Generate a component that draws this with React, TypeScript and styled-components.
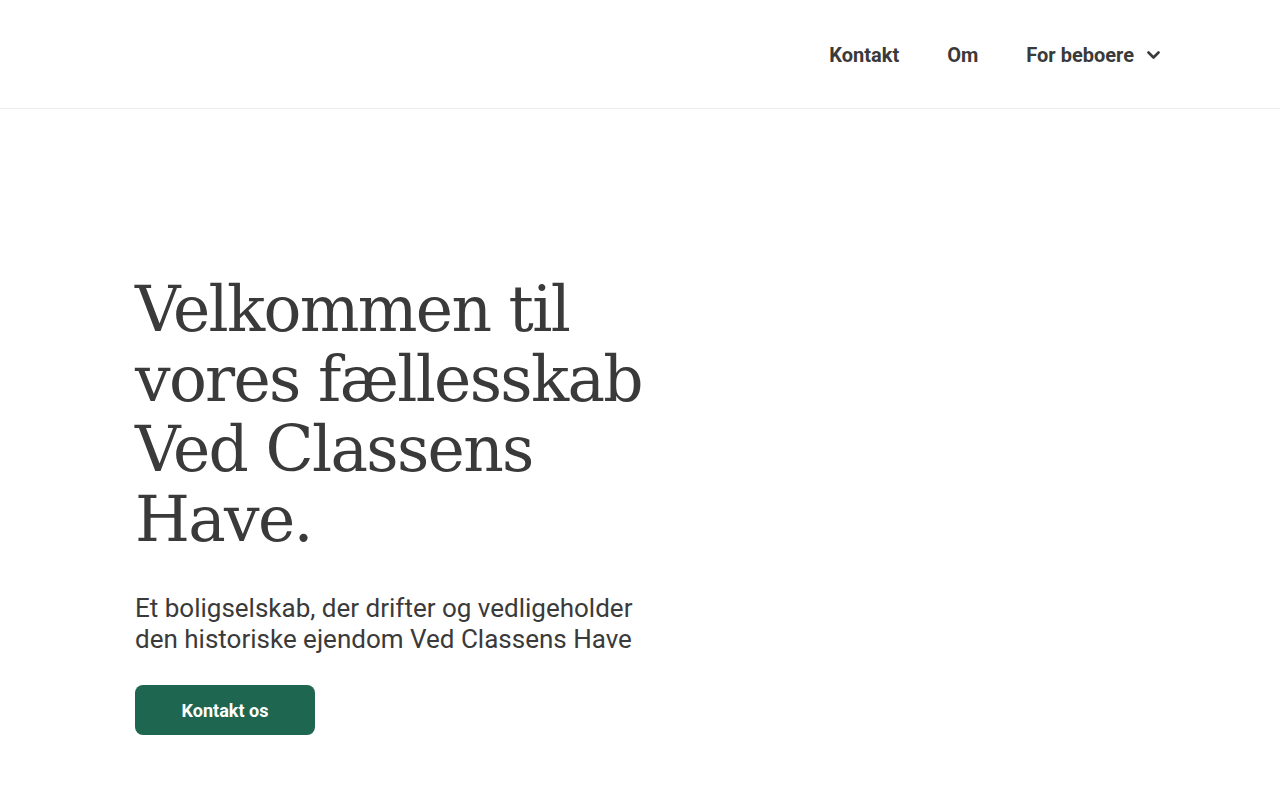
import React from "react";
import styled, { createGlobalStyle } from "styled-components";

const GlobalStyle = createGlobalStyle`
  html, body {
    margin: 0;
    padding: 0;
    background: #ffffff;
  }
  body {
    font-family: Roboto, "Liberation Sans", sans-serif;
    color: #3a3a3a;
  }
`;

const Header = styled.header`
  display: flex;
  justify-content: flex-end;
  align-items: center;
  height: 109px;
  padding: 2px 120px 0 135px;
  box-sizing: border-box;
  border-bottom: 1px solid #ececec;
`;

const Nav = styled.nav`
  display: flex;
  align-items: center;
  gap: 48px;
`;

const NavItem = styled.a`
  display: flex;
  align-items: center;
  gap: 13px;
  font-family: Roboto, "Liberation Sans", sans-serif;
  font-weight: 700;
  font-size: 20px;
  color: #3a3a3a;
  text-decoration: none;
  cursor: pointer;
`;

const Hero = styled.section`
  display: flex;
  flex-direction: column;
  align-items: flex-start;
  padding: 166px 135px 0;
`;

const Title = styled.h1`
  margin: 0;
  max-width: 540px;
  font-family: "DejaVu Serif", "Liberation Serif", serif;
  font-weight: 400;
  font-size: 63px;
  line-height: 70px;
  letter-spacing: -1.7px;
  color: #3a3a3a;
`;

const Lead = styled.p`
  margin: 38px 0 0;
  max-width: 520px;
  font-family: Roboto, "Liberation Sans", sans-serif;
  font-size: 26px;
  line-height: 31px;
  color: #3a3a3a;
`;

const Button = styled.a`
  display: flex;
  align-items: center;
  justify-content: center;
  margin-top: 30px;
  width: 180px;
  height: 50px;
  border-radius: 8px;
  background: #1e6650;
  color: #ffffff;
  font-family: Roboto, "Liberation Sans", sans-serif;
  font-weight: 700;
  font-size: 18px;
  text-decoration: none;
  cursor: pointer;
`;

const Chevron = () => (
  <svg width="13" height="9" viewBox="0 0 13 9" fill="none">
    <path d="M1.5 1.5L6.5 6.5L11.5 1.5" stroke="#3a3a3a" strokeWidth="2.6" strokeLinecap="round" strokeLinejoin="round" />
  </svg>
);

export default function App() {
  return (
    <>
      <GlobalStyle />
      <Header>
        <Nav>
          <NavItem>Kontakt</NavItem>
          <NavItem>Om</NavItem>
          <NavItem>
            For beboere
            <Chevron />
          </NavItem>
        </Nav>
      </Header>
      <Hero>
        <Title>Velkommen til vores fællesskab Ved Classens Have.</Title>
        <Lead>
          Et boligselskab, der drifter og vedligeholder den historiske ejendom Ved Classens Have
        </Lead>
        <Button>Kontakt os</Button>
      </Hero>
    </>
  );
}
